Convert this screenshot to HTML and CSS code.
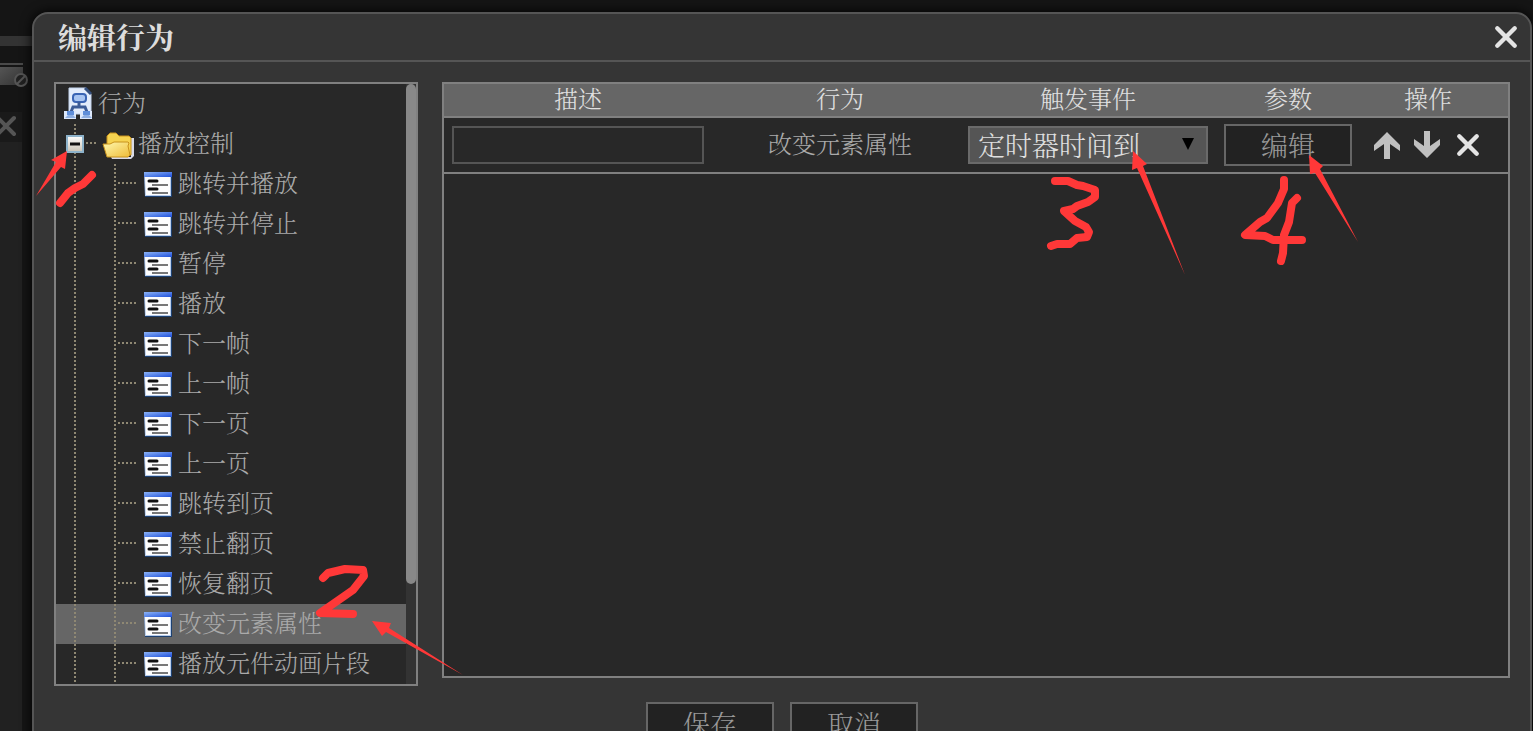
FILE: index.html
```html
<!DOCTYPE html>
<html lang="zh-CN">
<head>
  <meta charset="UTF-8" />
  <meta name="viewport" content="width=device-width, initial-scale=1.0"/>
  <title>编辑行为</title>
  <link rel="stylesheet" href="styles.css">
</head>
<body>
  <!-- shared icons -->
  <svg class="defs" width="0" height="0" aria-hidden="true">
    <defs>
      <linearGradient id="blueBar" x1="0" x2="1" y1="0" y2="1">
        <stop offset="0" stop-color="#8db4f5"/>
        <stop offset="1" stop-color="#1f50dc"/>
      </linearGradient>
      <linearGradient id="folderFront" x1="0" x2="1" y1="0" y2="1">
        <stop offset="0" stop-color="#fff9b0"/>
        <stop offset="1" stop-color="#eebc38"/>
      </linearGradient>
      <linearGradient id="boxFill" x1="0" x2="0" y1="0" y2="1">
        <stop offset="0" stop-color="#ffffff"/>
        <stop offset="1" stop-color="#c9c2b4"/>
      </linearGradient>
      <linearGradient id="toolFill" x1="0" x2="1" y1="0" y2="1">
        <stop offset="0" stop-color="#555"/>
        <stop offset="1" stop-color="#333"/>
      </linearGradient>
      <symbol id="item" viewBox="0 0 28 28">
        <path d="M0 2h28v25H1z" fill="#1d4172"/>
        <path d="M0 2h27v24H1z" fill="#b8cdec"/>
        <path d="M1 7h25v18H2z" fill="#fdfdfd"/>
        <path d="M0 2h28v5H0z" fill="url(#blueBar)"/>
        <path d="M5 11h8M5 19h8" stroke="#111" stroke-width="3" stroke-linecap="round"/>
        <path d="M8 15h16M8 23h16" stroke="#777" stroke-width="2"/>
      </symbol>
      <symbol id="cross" viewBox="0 0 22 22">
        <path d="M3 3l16 16M19 3L3 19" stroke="currentColor" stroke-width="4" stroke-linecap="round"/>
      </symbol>
      <symbol id="arrow" viewBox="0 0 28 28">
        <path d="M13 1L26 14v6L16 13v15h-6V13L0 20v-6z" fill="currentColor"/>
      </symbol>
    </defs>
  </svg>

  <aside class="backdrop">
    <div class="backdrop-bar"></div>
    <svg class="backdrop-tool" width="32" height="66" viewBox="0 0 32 66">
      <path d="M0 18h23" stroke="#4a4a4a" stroke-width="2"/>
      <path d="M0 21h23v18H0z" fill="url(#toolFill)"/>
      <circle cx="21" cy="34" r="6" fill="#202020" stroke="#555" stroke-width="2"/>
      <path d="M17 38l8-8" stroke="#555" stroke-width="2"/>
    </svg>
    <div class="backdrop-tab"><svg width="22" height="22"><use href="#cross"/></svg></div>
    <div class="backdrop-panel"></div>
  </aside>

  <main class="dialog">
    <header class="titlebar">
      <h1>编辑行为</h1>
      <button class="icon-btn" aria-label="关闭"><svg width="24" height="24"><use href="#cross"/></svg></button>
    </header>

    <div class="content">
      <nav class="tree">
        <ul>
          <li class="root">
            <svg width="28" height="34" viewBox="0 0 28 34">
              <path d="M5 1h17l5 6v17l-4 3H5z" fill="#e3ecfb" stroke="#c3d3ec"/>
              <path d="M21 1l6 6" fill="none" stroke="#35507f" stroke-width="3"/>
              <rect x="9" y="7" width="13" height="8" rx="3" fill="#a9c5f1" stroke="#3a64b4" stroke-width="2"/>
              <path d="M15 15v4M7 25l2-5h12l2 5" fill="none" stroke="#3c5b96" stroke-width="3"/>
              <path d="M0 24h12v8H0zM16 24h12v8H16z" fill="#dce8fb"/>
              <path d="M3 24h7v4H3zM19 24h7v4h-7z" fill="#5f8ed9"/>
              <path d="M1 31l3-3h5l3 3zM17 31l3-3h5l3 3z" fill="#8daee2"/>
            </svg>
            <span>行为</span>
          </li>
          <li class="folder">
            <svg class="toggle" width="18" height="18" viewBox="0 0 18 18">
              <rect x="1" y="1" width="16" height="16" fill="url(#boxFill)" stroke="#8db2ca" stroke-width="2"/>
              <path d="M4 9h10" stroke="#111" stroke-width="3"/>
            </svg>
            <svg class="folder-icon" width="32" height="27" viewBox="0 0 32 27">
              <path d="M9 25h20V6h3v18l-3 3H10z" fill="#d9dbe6"/>
              <path d="M5 11V4l3-3h6l3 3h10l2 2v17H6z" fill="#f6d350" stroke="#c8921c" stroke-width="1"/>
              <path d="M1 12h7l4-2h14l1 1-1 3 2 9-2 2H5z" fill="url(#folderFront)" stroke="#c8921c" stroke-width="1"/>
            </svg>
            <span>播放控制</span>
          </li>
          <li class="item"><svg width="28" height="28"><use href="#item"/></svg><span>跳转并播放</span></li>
          <li class="item"><svg width="28" height="28"><use href="#item"/></svg><span>跳转并停止</span></li>
          <li class="item"><svg width="28" height="28"><use href="#item"/></svg><span>暂停</span></li>
          <li class="item"><svg width="28" height="28"><use href="#item"/></svg><span>播放</span></li>
          <li class="item"><svg width="28" height="28"><use href="#item"/></svg><span>下一帧</span></li>
          <li class="item"><svg width="28" height="28"><use href="#item"/></svg><span>上一帧</span></li>
          <li class="item"><svg width="28" height="28"><use href="#item"/></svg><span>下一页</span></li>
          <li class="item"><svg width="28" height="28"><use href="#item"/></svg><span>上一页</span></li>
          <li class="item"><svg width="28" height="28"><use href="#item"/></svg><span>跳转到页</span></li>
          <li class="item"><svg width="28" height="28"><use href="#item"/></svg><span>禁止翻页</span></li>
          <li class="item"><svg width="28" height="28"><use href="#item"/></svg><span>恢复翻页</span></li>
          <li class="item selected"><svg width="28" height="28"><use href="#item"/></svg><span>改变元素属性</span></li>
          <li class="item"><svg width="28" height="28"><use href="#item"/></svg><span>播放元件动画片段</span></li>
        </ul>
        <div class="scrollbar"><div class="thumb"></div></div>
      </nav>

      <section class="actions">
        <table>
          <colgroup>
            <col class="col-desc"><col class="col-action"><col class="col-event"><col class="col-param"><col>
          </colgroup>
          <thead>
            <tr>
              <th>描述</th>
              <th>行为</th>
              <th>触发事件</th>
              <th>参数</th>
              <th class="ops">操作</th>
            </tr>
          </thead>
          <tbody>
            <tr>
              <td class="desc"><input type="text" aria-label="描述"></td>
              <td class="name">改变元素属性</td>
              <td>
                <div class="select">
                  <select aria-label="触发事件"><option>定时器时间到</option></select>
                  <svg width="12" height="12" viewBox="0 0 12 12"><path d="M0 0h12L6 12z"/></svg>
                </div>
              </td>
              <td><button class="btn">编辑</button></td>
              <td class="ops">
                <div class="op-list">
                  <button class="icon-btn grey" aria-label="上移"><svg width="28" height="28"><use href="#arrow"/></svg></button>
                  <button class="icon-btn grey down" aria-label="下移"><svg width="28" height="28"><use href="#arrow"/></svg></button>
                  <button class="icon-btn" aria-label="删除"><svg width="24" height="24"><use href="#cross"/></svg></button>
                </div>
              </td>
            </tr>
          </tbody>
        </table>
      </section>
    </div>

    <footer>
      <button class="btn">保存</button>
      <button class="btn">取消</button>
    </footer>
  </main>

  <!-- hand-drawn step marks -->
  <svg class="marks" width="1533" height="731" viewBox="0 0 1533 731" aria-hidden="true">
    <g class="pen">
      <path d="M60 203L68 193L75 188L83 184L92 175"/>
      <path d="M323 578L328 573L345 569L363 570L364 576L353 590L343 597L320 613L353 614"/>
      <path d="M1055 181H1068L1077 185L1083 186L1095 190V197L1088 202L1077 206L1073 209L1064 211L1075 221L1086 227L1089 232L1087 237L1077 238L1070 244H1057L1051 246"/>
      <path d="M1284 180V189L1278 203L1267 218L1260 222L1245 235L1265 236L1273 240H1302"/>
      <path d="M1297 198L1292 203L1289 222L1284 235L1283 253L1281 261"/>
    </g>
    <g class="pointer">
      <path d="M67 151L51 160L56 162L36 196L61 167L65 169z"/>
      <path d="M372 621L391 623L389 628L463 675L386 632L382 636z"/>
      <path d="M1133 151L1147 164L1143 166L1185 275L1137 168L1132 170z"/>
      <path d="M1309 155L1323 166L1320 169L1358 242L1315 173L1310 174z"/>
    </g>
  </svg>
</body>
</html>
```
FILE: styles.css
```css
* {
  box-sizing: border-box;
}

body {
  font-family: "Noto Serif CJK SC", "Noto Sans CJK SC", serif;
  font-size: 24px;
  font-weight: 300;
  line-height: 32px;
  display: grid;
  grid-template-columns: 32px 1fr;
  height: 100vh;
  margin: 0;
  overflow: hidden;
  background: #151515;
  color: #aaa;
}

.defs {
  position: absolute;
}

svg {
  display: block;
  flex: none;
}

/* page behind the dialog */
.backdrop {
  padding-top: 36px;
}

.backdrop-bar {
  height: 10px;
  background: #333;
}

.backdrop-tab {
  width: 22px;
  height: 30px;
  padding-top: 3px;
  background: #1a1a1a;
  color: #555;
}

.backdrop-tab svg {
  margin-left: -5px;
}

.backdrop-panel {
  width: 22px;
  height: 100%;
  background: #212121;
}

.dialog {
  margin: 12px 1px 0 0;
  height: 760px;
  background: #353535;
  border: 2px solid #555;
  border-radius: 16px;
  box-shadow: 0 0 12px #000;
}

.titlebar {
  display: flex;
  align-items: center;
  justify-content: space-between;
  height: 48px;
  padding: 0 4px 0 24px;
  border-bottom: 2px solid #555;
}

h1 {
  margin: 0;
  font-size: 29px;
  font-weight: bold;
  color: #ddd;
}

button {
  font-family: inherit;
  font-weight: inherit;
  padding: 0;
  cursor: pointer;
}

.icon-btn {
  display: flex;
  align-items: center;
  justify-content: center;
  width: 40px;
  height: 40px;
  background: none;
  border: none;
  color: #e4e4e4;
}

.grey {
  color: #c0c0c0;
}

.down svg {
  transform: scaleY(-1);
}

.btn {
  width: 128px;
  height: 42px;
  font-size: 27px;
  line-height: 36px;
  background: #222;
  border: 2px solid #666;
  color: #999;
}

.content {
  display: flex;
  align-items: flex-start;
  gap: 24px;
  padding: 20px 20px 16px;
}

/* tree */
.tree {
  display: flex;
  flex: none;
  width: 364px;
  background: #282828;
  border: 2px solid #808080;
}

.tree ul {
  flex: 1;
  margin: 0;
  padding: 0;
  list-style: none;
}

.tree li {
  --dots-y: repeating-linear-gradient(#8f8873 0 2px, transparent 2px 4px);
  --dots-x: repeating-linear-gradient(90deg, #8f8873 0 2px, transparent 2px 4px);
  display: flex;
  align-items: center;
  gap: 6px;
  height: 40px;
  background-repeat: no-repeat;
}

.tree span {
  padding-bottom: 4px;
}

.root {
  padding-left: 8px;
}

.folder {
  padding-left: 10px;
  background-image: var(--dots-y), var(--dots-x);
  background-position: 18px 0, 30px 18px;
  background-size: 2px 40px, 10px 2px;
}

.tree .folder {
  gap: 4px;
}

.folder-icon {
  margin: 3px 0 0 14px;
}

.item {
  padding-left: 88px;
  background-image: var(--dots-y), var(--dots-y), var(--dots-x);
  background-position: 18px 0, 58px 0, 62px 18px;
  background-size: 2px 40px, 2px 40px, 18px 2px;
}

.selected {
  background-color: #666;
}

.scrollbar {
  width: 10px;
  background: #333;
}

.thumb {
  height: 500px;
  border-radius: 5px;
  background: #888;
}

/* table of actions */
.actions {
  flex: 1;
  min-height: 596px;
  background: #282828;
  border: 2px solid #808080;
}

table {
  width: 100%;
  table-layout: fixed;
  border-spacing: 0;
}

.col-desc {
  width: 268px;
}

.col-action {
  width: 256px;
}

.col-event {
  width: 240px;
}

.col-param {
  width: 160px;
}

th, td {
  padding: 0;
  text-align: center;
  font-weight: 300;
  border-bottom: 2px solid #808080;
}

th {
  height: 34px;
  padding-bottom: 4px;
  line-height: 28px;
  background: #666;
  color: #e0e0e0;
}

td {
  height: 56px;
}

td.name {
  padding-bottom: 4px;
}

td .btn {
  display: block;
  margin: auto;
}

.desc input {
  display: block;
  width: 252px;
  height: 38px;
  margin-left: 8px;
  padding: 0 8px;
  font: inherit;
  color: #ddd;
  background: #282828;
  border: 2px solid #555;
}

.select {
  position: relative;
}

select {
  display: block;
  appearance: none;
  width: 100%;
  height: 38px;
  padding: 0 8px;
  font-family: inherit;
  font-size: 27px;
  font-weight: inherit;
  line-height: 32px;
  color: #e0e0e0;
  background: #555;
  border: 2px solid #6a6a6a;
  border-radius: 0;
}

.select svg {
  position: absolute;
  right: 14px;
  top: 12px;
  pointer-events: none;
}

.ops {
  padding-right: 20px;
}

.op-list {
  display: flex;
}

footer {
  display: flex;
  justify-content: center;
  gap: 16px;
}

footer .btn {
  height: 44px;
}

.marks {
  position: absolute;
  top: 0;
  left: 0;
  pointer-events: none;
}

.pen {
  fill: none;
  stroke: #ff3838;
  stroke-width: 8;
  stroke-linecap: round;
  stroke-linejoin: round;
}

.pointer {
  fill: #ff3838;
}
```
